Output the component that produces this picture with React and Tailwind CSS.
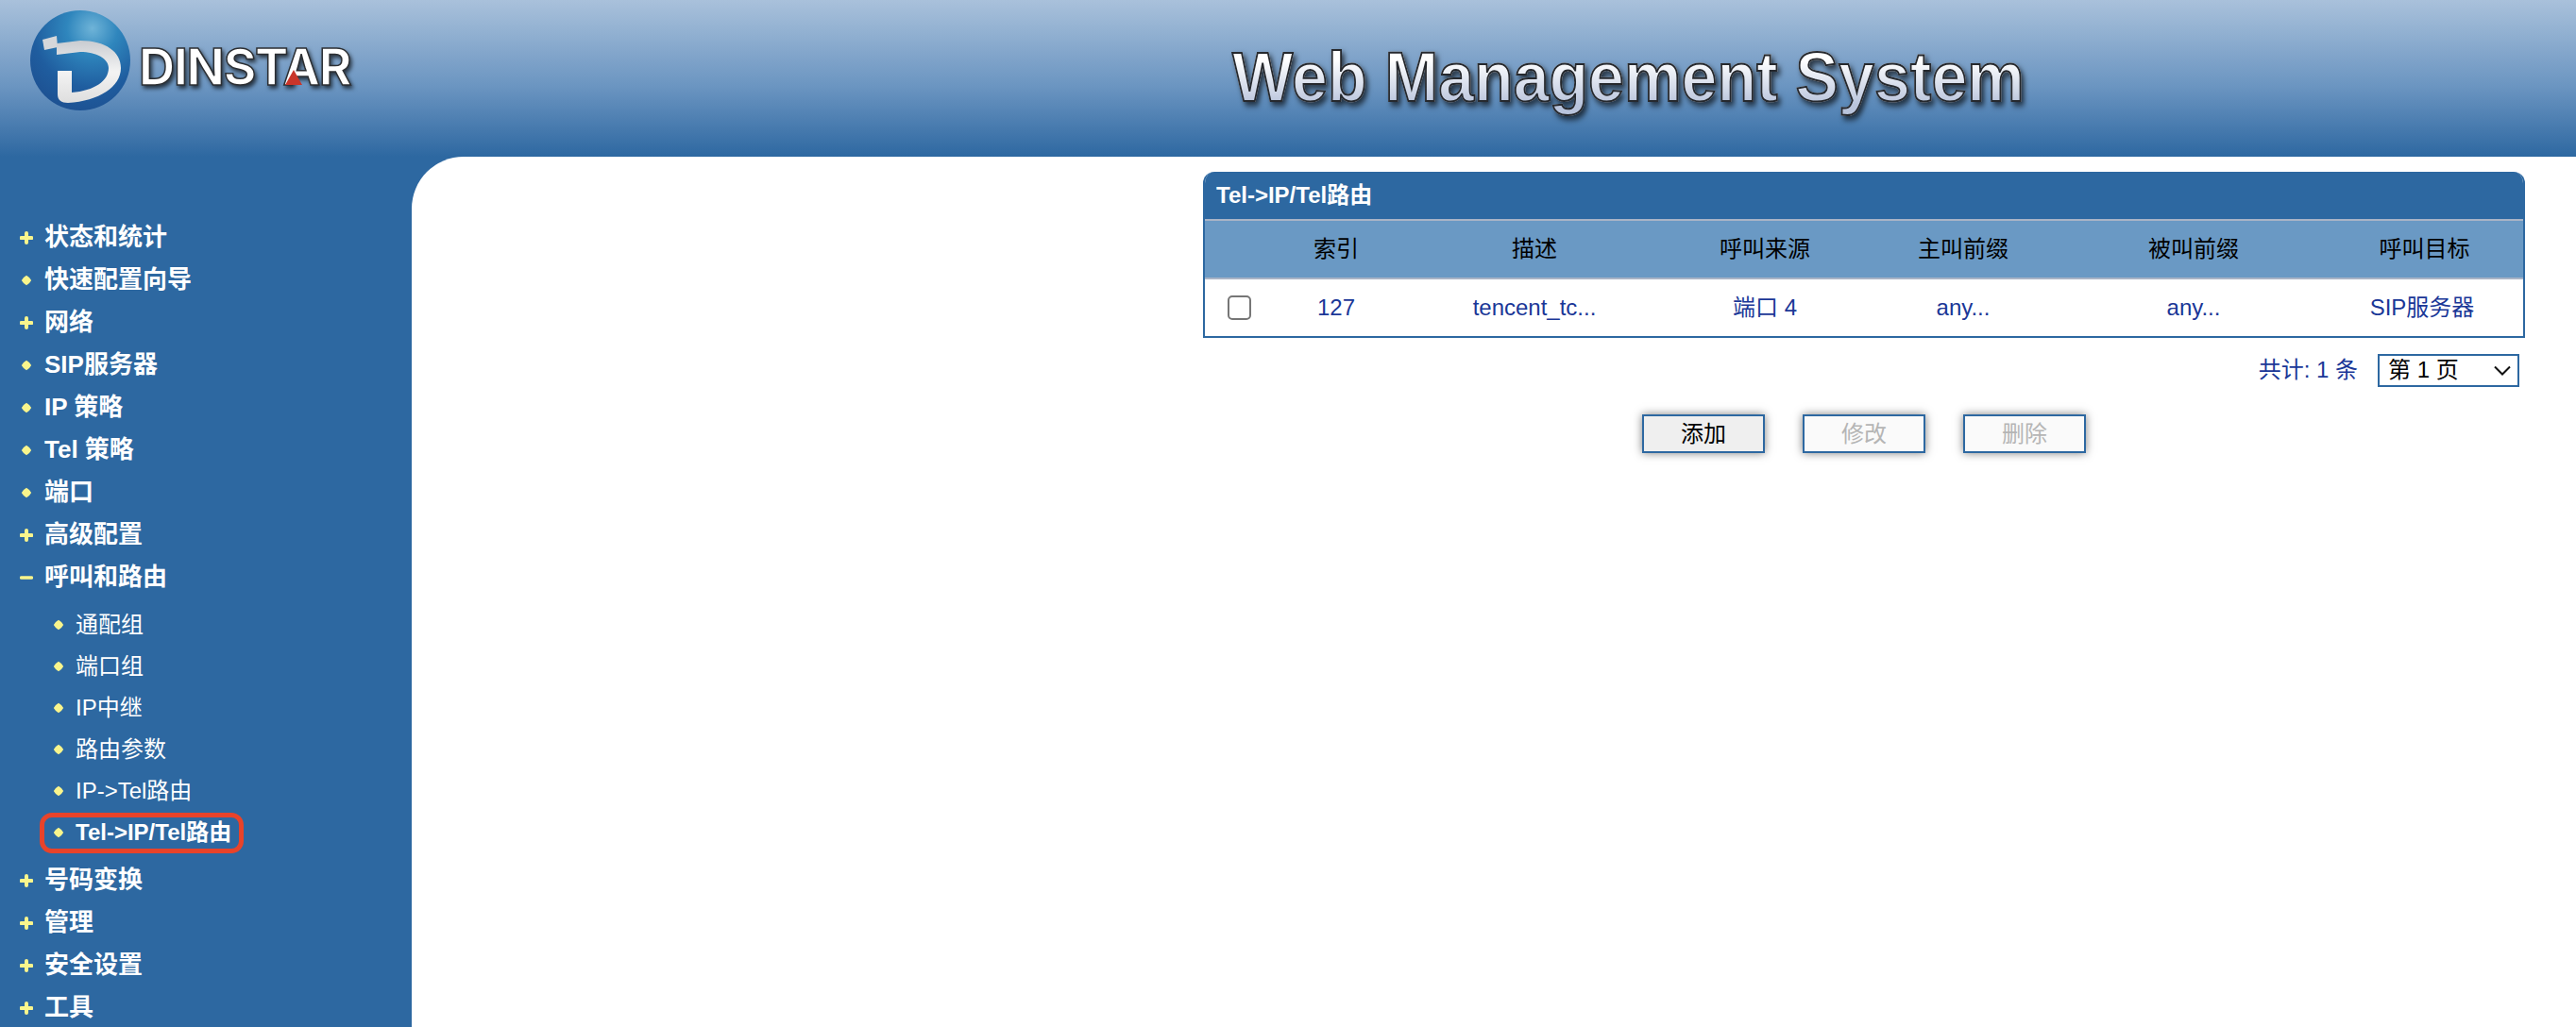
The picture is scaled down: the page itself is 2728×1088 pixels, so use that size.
const font = { fontFamily: '"Liberation Sans","Noto Sans CJK SC",sans-serif' };

const groupA = [
  ["plus", "状态和统计"],
  ["dot", "快速配置向导"],
  ["plus", "网络"],
  ["dot", "SIP服务器"],
  ["dot", "IP 策略"],
  ["dot", "Tel 策略"],
  ["dot", "端口"],
  ["plus", "高级配置"],
  ["minus", "呼叫和路由"],
];
const sub = ["通配组", "端口组", "IP中继", "路由参数", "IP->Tel路由", "Tel->IP/Tel路由"];
const groupB = ["号码变换", "管理", "安全设置", "工具"];

function Mark({ kind }) {
  return (
    <svg width="14" height="14" viewBox="0 0 14 14" className="shrink-0 [filter:blur(0.4px)]">
      {kind === "plus" && <path d="M7 2v10M1.5 7h11" stroke="#f9f58c" strokeWidth="4" strokeLinecap="round" />}
      {kind === "minus" && <path d="M1.5 7h11" stroke="#f9f58c" strokeWidth="3.4" strokeLinecap="round" />}
      {kind === "dot" && <path d="M7 1.8L10 4L12.2 7L10 10L7 12.2L4 10L1.8 7L4 4Z" fill="#f9f58c" />}
    </svg>
  );
}

function Main({ kind, label }) {
  return (
    <div className="h-[45px] flex items-center pl-[21px] gap-[12px] text-[26px] font-bold text-white whitespace-nowrap">
      <Mark kind={kind} />
      <span>{label}</span>
    </div>
  );
}

function Logo() {
  return (
    <div className="relative flex items-start h-[112px] w-[360px]">
      <svg width="112" height="112" viewBox="29 8 112 112" className="shrink-0">
        <defs>
          <radialGradient id="ball" cx="0.62" cy="0.18" r="0.85">
            <stop offset="0" stopColor="#6fb4d8" />
            <stop offset="0.3" stopColor="#2f86bd" />
            <stop offset="0.7" stopColor="#1f5d9f" />
            <stop offset="1" stopColor="#1d5192" />
          </radialGradient>
          <linearGradient id="dee" x1="0" y1="0" x2="0" y2="1">
            <stop offset="0" stopColor="#c9ccd1" />
            <stop offset="0.5" stopColor="#f3f3f3" />
            <stop offset="1" stopColor="#dedede" />
          </linearGradient>
        </defs>
        <circle cx="85" cy="64" r="53" fill="url(#ball)" />
        <path d="M45 42L60 38L61 50L47 53Z" fill="#d5d7da" />
        <path
          d="M60 46L85 43C112 43 128 55 128 72C128 92 105 107 72 109C65 109 61 106 61 100L61 75L76 75L76 98C100 96 115 86 115 72C115 62 102 55 85 55L60 58Z"
          fill="url(#dee)"
        />
      </svg>
      <div className="relative ml-[6px] mt-[36px] leading-none">
        <span
          className="block text-[53px] leading-[54px] font-bold text-white tracking-[-1.3px] [-webkit-text-stroke:1.5px_#2c2f33] [filter:drop-shadow(2px_3px_2px_rgba(0,0,0,0.65))]"
          style={{ fontFamily: '"Inter","Liberation Sans",sans-serif' }}
        >
          DINSTAR
        </span>
        <svg width="18" height="16" viewBox="0 0 18 16" className="absolute left-[155px] top-[30px]">
          <path d="M9 0L18 16H0Z" fill="#c9352a" />
        </svg>
      </div>
    </div>
  );
}

function ActionButton({ children, disabled }) {
  return (
    <button
      disabled={disabled}
      className={
        "w-[130px] h-[41px] border-[2.5px] border-[#2d68a1] text-[24px] shadow-[0_0_9px_rgba(0,0,0,0.5)] flex items-center justify-center " +
        (disabled ? "bg-[#fafafa] text-[#b5b5b5]" : "bg-[#efefef] text-black")
      }
    >
      {children}
    </button>
  );
}

const columns = "grid grid-cols-[72px_134px_286px_202px_218px_270px_214px] items-center text-center";

export default function App() {
  return (
    <div className="h-[1088px] w-full overflow-hidden flex flex-col bg-[#2d68a1]" style={font}>
      <header className="h-[166px] shrink-0 bg-gradient-to-b from-[#a9c1db] via-[#6b95c1] via-55% to-[#2d68a1] flex items-start pl-[29px] pt-[8px]">
        <Logo />
        <div className="ml-[916px] mt-[30px]">
          <span className="block origin-left scale-x-[0.908] font-bold text-[75px] leading-[86px] whitespace-nowrap bg-gradient-to-b from-white from-30% to-[#b9c4dc] to-85% bg-clip-text text-transparent [-webkit-text-stroke:2px_#26292e] [filter:drop-shadow(3px_4px_3px_rgba(0,0,0,0.65))]">
            Web Management System
          </span>
        </div>
      </header>

      <div className="flex flex-1 min-h-0">
        <aside className="w-[436px] shrink-0 pt-[63px]">
          {groupA.map(([kind, label]) => (
            <Main key={label} kind={kind} label={label} />
          ))}
          <div className="pt-[6px] pb-[6px]">
            {sub.map((label, i) => {
              const active = i === sub.length - 1;
              return (
                <div
                  key={label}
                  className={
                    "relative h-[44px] flex items-center pl-[55px] gap-[11px] text-[24px] text-white whitespace-nowrap " +
                    (active ? "font-bold" : "")
                  }
                >
                  <Mark kind="dot" />
                  <span>{label}</span>
                  {active && (
                    <div className="absolute left-[42px] top-px w-[216px] h-[43px] border-[5px] border-[#e8432a] rounded-[13px]" />
                  )}
                </div>
              );
            })}
          </div>
          {groupB.map((label) => (
            <Main key={label} kind="plus" label={label} />
          ))}
        </aside>

        <main className="flex-1 bg-white rounded-tl-[55px] pt-[16px] pr-[54px] flex flex-col items-end">
          <section className="w-[1400px] border-x-2 border-b-[2px] border-[#2d68a1] rounded-t-[12px] overflow-hidden">
            <div className="h-[50px] bg-[#2d68a1] text-white font-bold text-[24px] flex items-center pl-[12px]">
              Tel-&gt;IP/Tel路由
            </div>
            <div className={columns + " h-[64px] bg-[#6a99c4] border-y-2 border-[#a9b4c6] text-[24px] text-black"}>
              <div />
              <div>索引</div>
              <div>描述</div>
              <div>呼叫来源</div>
              <div>主叫前缀</div>
              <div>被叫前缀</div>
              <div className="pl-[5px]">呼叫目标</div>
            </div>
            <div className={columns + " h-[60px] bg-white text-[24px] text-[#1a3797]"}>
              <div className="flex justify-center">
                <input type="checkbox" className="appearance-none w-[25px] h-[26px] border-2 border-[#767676] rounded-[5px] bg-white" />
              </div>
              <div>127</div>
              <div>tencent_tc...</div>
              <div>端口 4</div>
              <div>any...</div>
              <div>any...</div>
              <div>SIP服务器</div>
            </div>
          </section>

          <div className="w-[1400px] flex items-center justify-end gap-[21px] mt-[16px] pr-[6px]">
            <span className="text-[24px] text-[#1a3797]">共计: 1 条</span>
            <div className="relative">
              <select className="appearance-none w-[150px] h-[35px] border-2 border-[#2d68a1] bg-white text-[24px] text-black pl-[9px] leading-none rounded-none">
                <option>第 1 页</option>
              </select>
              <svg width="18" height="11" viewBox="0 0 18 11" className="absolute right-[9px] top-[12px] pointer-events-none">
                <path d="M1 1.5L9 9.5L17 1.5" fill="none" stroke="#111" strokeWidth="2" />
              </svg>
            </div>
          </div>

          <div className="w-[1400px] flex mt-[29px] pl-[465px] gap-[40px]">
            <ActionButton>添加</ActionButton>
            <ActionButton disabled>修改</ActionButton>
            <ActionButton disabled>删除</ActionButton>
          </div>
        </main>
      </div>
    </div>
  );
}
